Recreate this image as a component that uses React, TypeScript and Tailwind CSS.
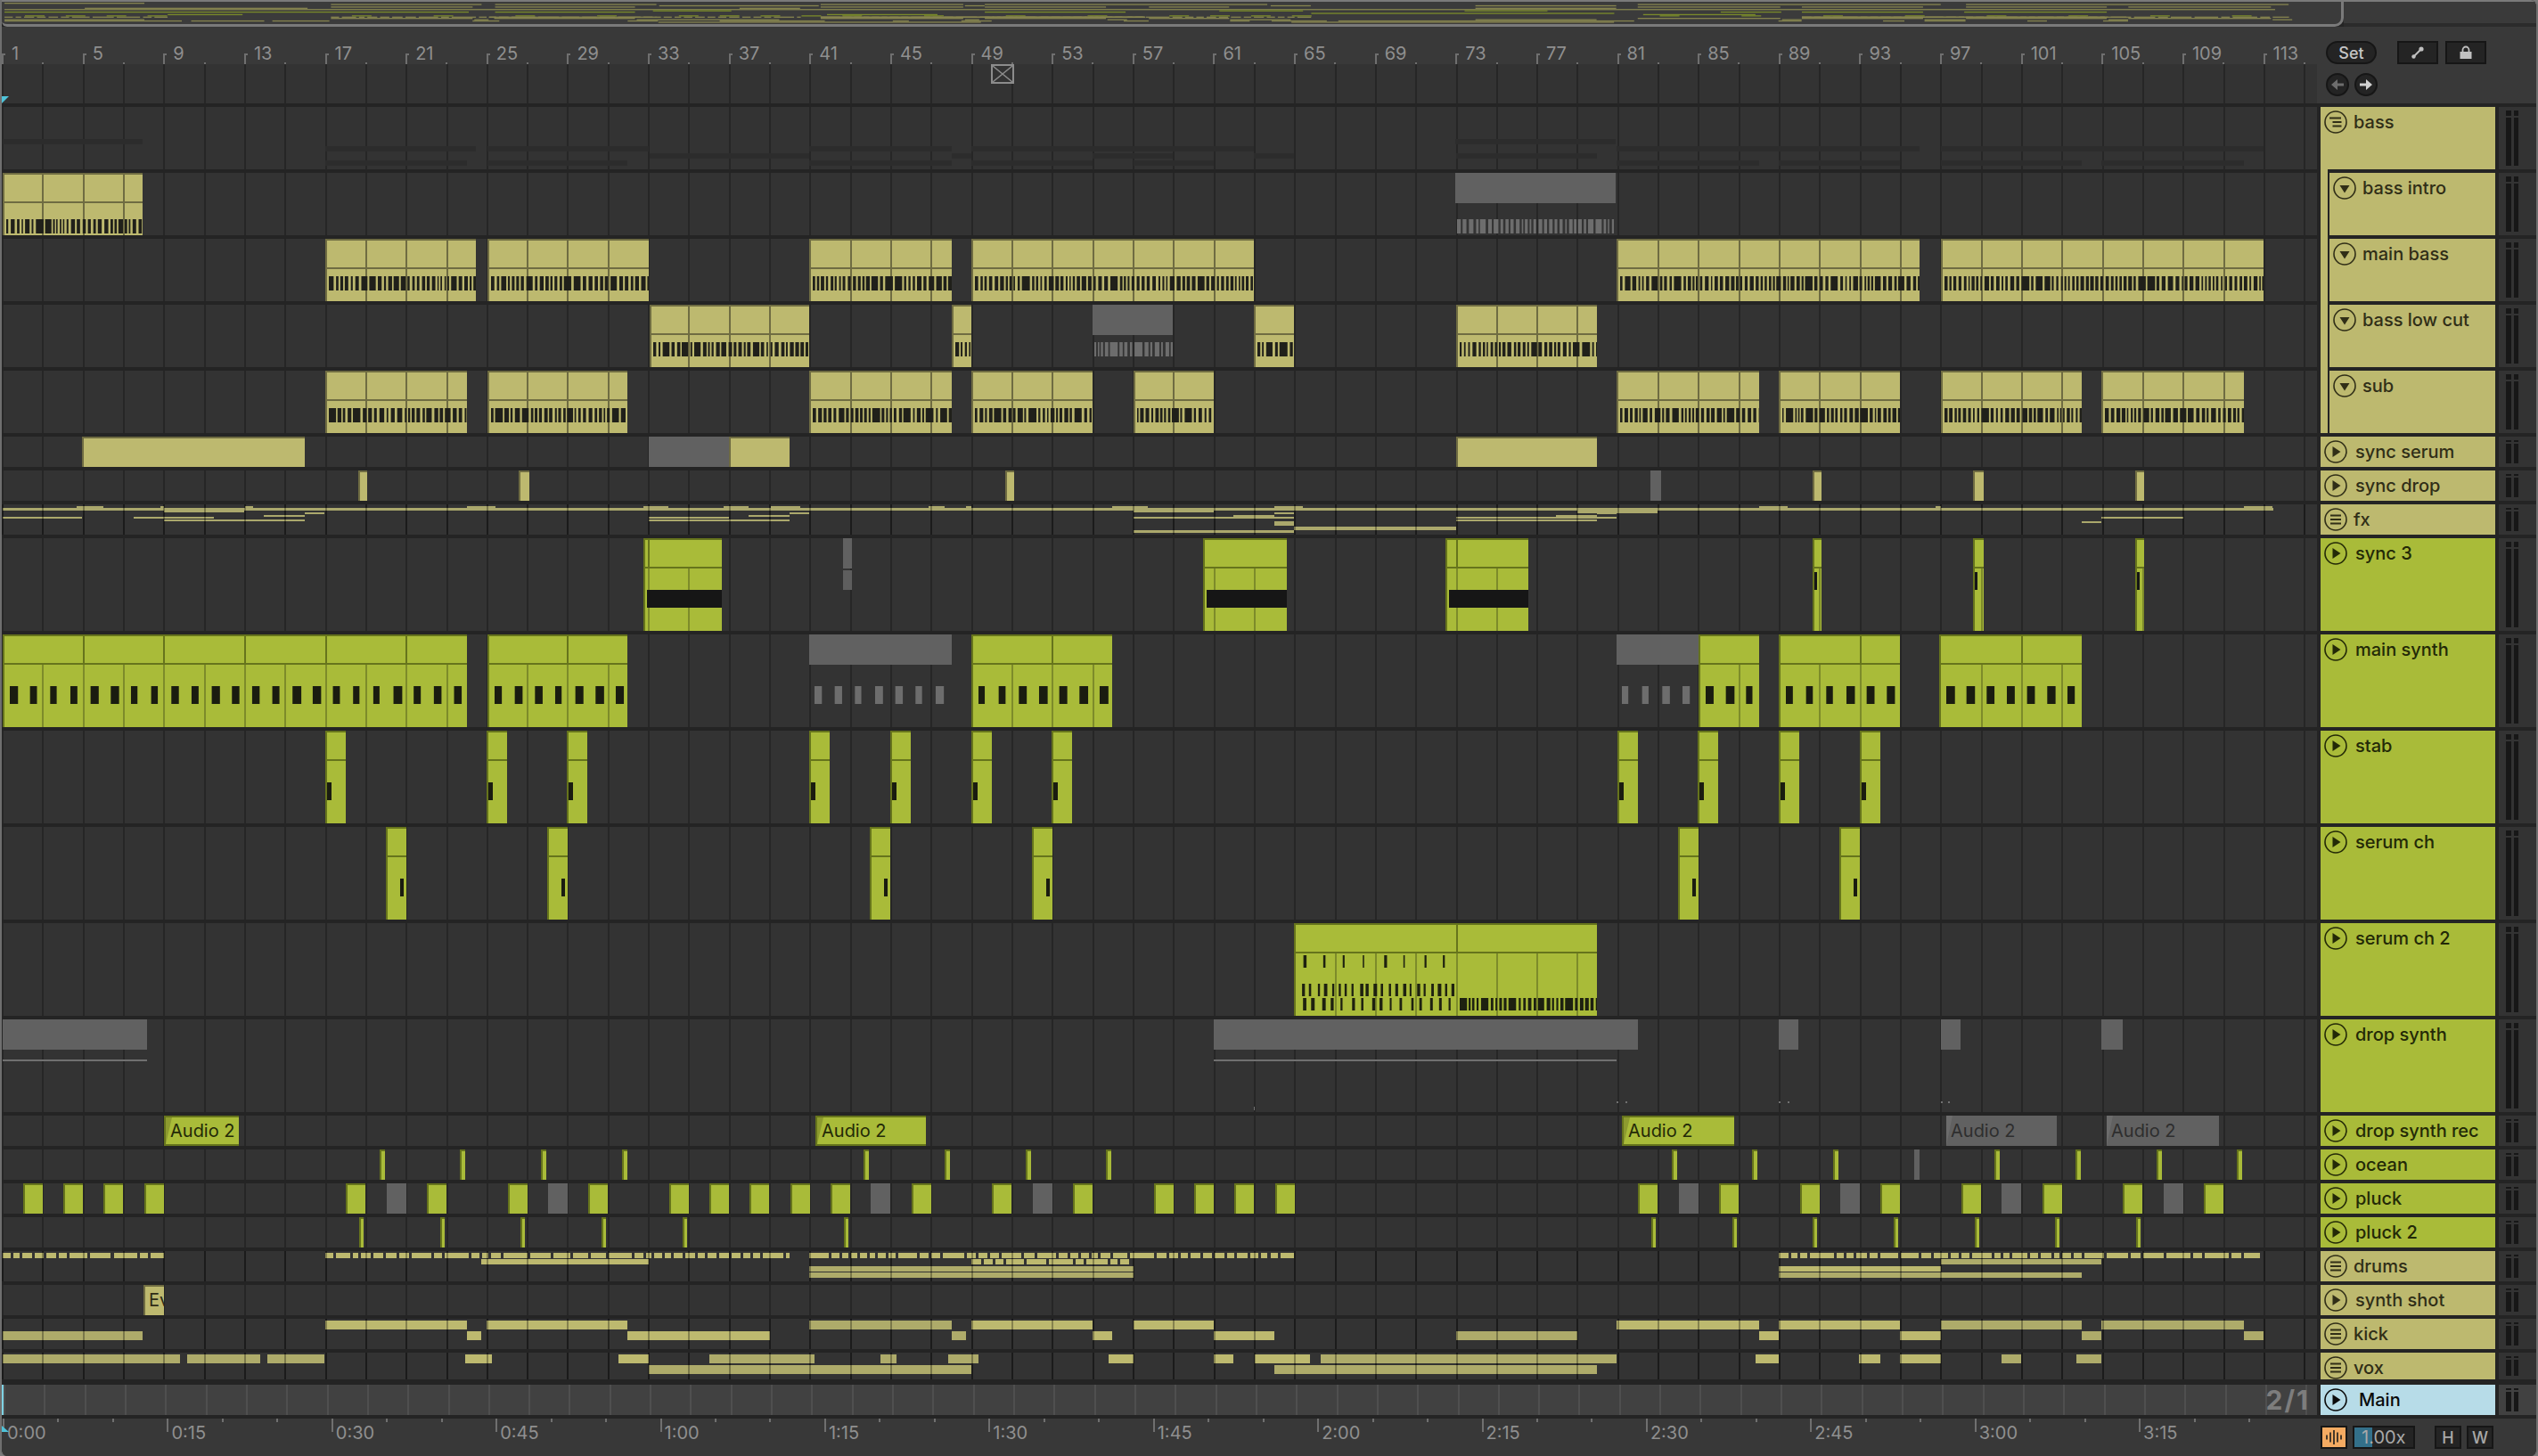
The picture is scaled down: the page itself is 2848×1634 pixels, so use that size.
import React from 'react';

type Span = [number, number];
type Seg = [number, number, number, number, boolean?];
type Tone = 'khaki' | 'green' | 'gray';

const BAR = 22.66;
// x position of a bar on the page
const bx = (bar: number) => 3 + (bar - 1) * BAR;

const seeded = (seed: number) => {
  let s = seed * 7919 + 17;
  return () => {
    s = (s * 16807) % 2147483647;
    return (s % 1000) / 1000;
  };
};

const toneClass: Record<Tone, { body: string; line: string; thin: string }> = {
  khaki: { body: 'bg-[#bdb96f] border-t-2 border-l-2 border-[#6f6c42]', line: 'bg-[#6f6c42]', thin: 'bg-[#6f6c42]' },
  green: { body: 'bg-[#a9bb39] border-t-2 border-l-2 border-[#66741c]', line: 'bg-[#66741c]', thin: 'bg-[#7d8b2a]' },
  gray: { body: '', line: 'bg-[#5a5a5a]', thin: 'bg-[#262626]' },
};

const gridXs = (from: number, to: number, step: number) => {
  const xs: number[] = [];
  for (let k = 0; k < 60; k++) {
    const x = 3 + k * step * BAR;
    if (x > from + 4 && x < to) xs.push(x);
  }
  return xs;
};

const Notes = ({ items, top, h, color }: { items: Span[]; top: number; h: number; color: string }) => (
  <svg className="absolute left-0" style={{ top }} width="100%" height={h}>
    {items.map(([x, w], i) => (
      <rect key={i} x={x} y={0} width={w} height={h} fill={color} />
    ))}
  </svg>
);

const barcode = (width: number, seed: number) => {
  const r = seeded(seed);
  const out: Span[] = [];
  let x = 2;
  while (x < width - 1) {
    const w = r() < 0.2 ? 5 + r() * 4 : 1.5 + r() * 3;
    out.push([x, Math.min(w, width - x)]);
    x += w + 1.5 + r() * 1.5;
  }
  return out;
};

type ClipProps = {
  span: Span;
  tone: Tone;
  title?: boolean;
  titleStep?: number;
  bodyStep?: number;
  children?: React.ReactNode;
};

const Clip = ({ span, tone, title = true, titleStep = 2, bodyStep = 2, children }: ClipProps) => {
  const [from, to] = span;
  const c = toneClass[tone];
  const width = to - from;
  if (tone === 'gray') {
    return (
      <div className="absolute top-0 bottom-0" style={{ left: from - 2, width }}>
        <div className={`${title ? 'h-[34px]' : 'h-full'} bg-[#616161]`} />
        {children}
      </div>
    );
  }
  return (
    <div className={`absolute top-0 bottom-0 overflow-hidden ${c.body}`} style={{ left: from - 2, width }}>
      {title && (
        <>
          <div className={`absolute left-0 right-0 top-[30px] h-[2px] ${c.line}`} />
          {gridXs(from, to, titleStep).map((x) => (
            <div key={x} className={`absolute top-0 h-[30px] w-[2px] ${c.line}`} style={{ left: x - from - 3 }} />
          ))}
          {gridXs(from, to, bodyStep).map((x) => (
            <div key={x} className={`absolute top-[32px] bottom-0 w-[2px] ${c.thin}`} style={{ left: x - from - 3 }} />
          ))}
        </>
      )}
      {children}
    </div>
  );
};

const BassClip = ({ span, gray, top, seed }: { span: Span; gray?: boolean; top: number; seed: number }) => {
  const items = barcode(span[1] - span[0], seed);
  if (gray) {
    return (
      <Clip span={span} tone="gray">
        <Notes items={items} top={top} h={16} color="#6d6d6d" />
      </Clip>
    );
  }
  return (
    <Clip span={span} tone="khaki">
      <Notes items={items} top={top - 2} h={16} color="#20201a" />
    </Clip>
  );
};

const Segs = ({ items, color, dimColor }: { items: Seg[]; color: string; dimColor?: string }) => (
  <>
    {items.map(([from, to, top, h, dim], i) => (
      <div
        key={i}
        className={dim ? dimColor : color}
        style={{ position: 'absolute', left: from - 2, width: to - from, top, height: h }}
      />
    ))}
  </>
);

const LineOverlay = () => (
  <div className="absolute inset-0 bg-[repeating-linear-gradient(90deg,rgba(0,0,0,0.3)_0px,rgba(0,0,0,0.3)_2px,transparent_2px,transparent_45.32px)]" />
);

const bassIntro: Span[] = [[3, 160]];
const bassIntroGray: Span[] = [[1633, 1813]];
const mainBass: Span[] = [[365, 534], [547, 728], [908, 1068], [1090, 1407], [1814, 2154], [2178, 2540]];
const lowCut: Span[] = [[729, 908], [1068, 1090], [1407, 1452], [1634, 1792]];
const lowCutGray: Span[] = [[1226, 1316]];
const sub: Span[] = [[365, 524], [547, 704], [908, 1068], [1090, 1226], [1272, 1362], [1814, 1974], [1996, 2132], [2178, 2336], [2358, 2518]];
const syncSerum: Span[] = [[92, 342], [818, 886], [1634, 1792]];
const syncDrop: Span[] = [[402, 412], [582, 594], [1128, 1138], [2034, 2044], [2214, 2226], [2396, 2406]];
const sync3: Span[] = [[722, 810], [1350, 1444], [1622, 1715]];
const sync3Thin: Span[] = [[2034, 2044], [2214, 2226], [2396, 2406]];
const mainSynth: Span[] = [[3, 524], [547, 704], [1090, 1248], [1906, 1974], [1996, 2132], [2176, 2336]];
const mainSynthGray: Span[] = [[908, 1068], [1814, 1906]];
const stab = [17, 25, 29, 41, 45, 49, 53, 81, 85, 89, 93];
const serumCh = [20, 28, 44, 52, 84, 92];
const dropSynth: Span[] = [[3, 165], [1362, 1838], [1996, 2018], [2178, 2200], [2358, 2382]];
const audioGreen: Span[] = [[184, 268], [915, 1039], [1820, 1946]];
const audioGray: Span[] = [[2184, 2308], [2364, 2490]];
const ocean = [19.65, 23.65, 27.65, 31.65, 43.65, 47.65, 51.65, 55.65, 83.65, 87.65, 91.65, 99.65, 103.65, 107.65, 111.65];
const pluck = [2, 4, 6, 8, 18, 22, 26, 30, 34, 36, 38, 40, 42, 46, 50, 54, 58, 60, 62, 64, 82, 86, 90, 94, 98, 102, 106, 110];
const pluckGray = [20, 28, 44, 52, 84, 92, 100, 108];
const pluck2 = [18.65, 22.65, 26.65, 30.65, 34.65, 42.65, 82.65, 86.65, 90.65, 94.65, 98.65, 102.65, 106.65];

const fxSegs: Seg[] = [
  [3, 2551, 4, 3],
  [86, 116, 2, 2], [180, 184, 2, 2], [275, 284, 2, 2], [524, 556, 2, 2], [722, 750, 2, 2], [812, 840, 2, 2],
  [865, 898, 2, 2], [1042, 1060, 2, 2], [1084, 1090, 2, 2], [1248, 1288, 2, 2], [1430, 1462, 2, 2],
  [1974, 2006, 2, 2], [2172, 2178, 2, 2], [2518, 2550, 2, 2],
  [184, 274, 7, 2], [1272, 1362, 7, 2], [1770, 1860, 7, 3],
  [342, 364, 9, 2], [886, 908, 9, 2], [1430, 1452, 9, 2], [1792, 1814, 9, 2],
  [296, 342, 12, 2], [840, 886, 12, 2], [1384, 1430, 12, 2], [1746, 1792, 12, 2],
  [3, 92, 14, 2], [150, 240, 14, 2], [728, 818, 14, 2], [1272, 1452, 14, 2], [1634, 1814, 14, 2], [2358, 2450, 14, 2],
  [184, 342, 17, 2], [728, 886, 17, 2], [1634, 1792, 17, 2],
  [1430, 1452, 19, 2], [2336, 2358, 19, 2], [1430, 1452, 21, 3],
  [1452, 1634, 25, 4],
  [1272, 1452, 29, 3],
];

const dashes = (from: number, to: number, top: number, h: number, seed: number, big = 1) => {
  const r = seeded(seed);
  const out: Seg[] = [];
  let x = from;
  while (x < to - 2) {
    const w = r() < 0.35 ? 16 + r() * 12 * big : 6 + r() * 6;
    out.push([x, Math.min(x + w, to), top, h]);
    x += w + 3;
  }
  return out;
};

const drumSegs: Seg[] = [
  ...dashes(3, 184, 2, 6, 3),
  ...dashes(365, 886, 2, 6, 5),
  ...dashes(908, 1452, 2, 6, 7),
  ...dashes(1996, 2540, 2, 6, 9),
  [540, 728, 9, 6],
  ...dashes(1090, 1270, 9, 6, 11, 2),
  [2178, 2358, 9, 6, true],
  [908, 1272, 17, 6, true],
  [1996, 2178, 17, 6],
  [908, 1272, 24, 6, true],
  [1996, 2336, 24, 6, true],
];

const T = 2;
const B = 14;
const kickSegs: Seg[] = [
  [3, 160, B, 10, true], [365, 524, T, 10], [524, 540, B, 10], [546, 704, T, 10], [704, 864, B, 10],
  [908, 1068, T, 10, true], [1068, 1084, B, 10, true], [1090, 1226, T, 10], [1226, 1248, B, 10],
  [1272, 1362, T, 10], [1362, 1430, B, 10], [1634, 1770, B, 10, true], [1814, 1974, T, 10], [1974, 1996, B, 10],
  [1996, 2132, T, 10], [2132, 2178, B, 10], [2178, 2336, T, 10, true], [2336, 2358, B, 10, true],
  [2358, 2518, T, 10, true], [2518, 2540, B, 10, true],
];
const voxSegs: Seg[] = [
  [3, 202, T, 10, true], [210, 292, T, 10, true], [300, 364, T, 10, true], [522, 552, T, 10], [694, 728, T, 10],
  [728, 1090, B, 10, true], [796, 914, T, 10, true], [988, 1006, T, 10, true], [1064, 1098, T, 10, true],
  [1244, 1272, T, 10], [1362, 1384, T, 10], [1408, 1470, T, 10], [1482, 1814, T, 10, true], [1430, 1792, B, 10, true],
  [1970, 1996, T, 10], [2086, 2110, T, 10], [2132, 2178, T, 10], [2246, 2268, T, 10, true], [2330, 2358, T, 10, true],
];

type Track = {
  name: string;
  h: string;
  color: 'khaki' | 'green' | 'sky';
  icon: 'groupOpen' | 'group' | 'down' | 'play';
  nested?: boolean;
  cls?: string;
  render: () => React.ReactNode;
};

const miniBars = (spans: Span[], top: number) =>
  spans.map(([from, to]) => (
    <div
      key={`${from}-${top}`}
      className="absolute h-[6px] bg-[#2c2c2c]"
      style={{ left: from - 2, width: to - from, top }}
    />
  ));

const AudioClip = ({ span, gray }: { span: Span; gray?: boolean }) => (
  <div
    className={`absolute top-0 bottom-0 overflow-hidden pl-[5px] text-[20px] leading-[30px] ${
      gray ? 'bg-[#616161] pt-[2px] text-[#2e2e2e]' : 'border-t-2 border-b-2 border-l-2 border-[#66741c] bg-[#a9bb39] text-[#232907]'
    }`}
    style={{ left: span[0] - 2, width: span[1] - span[0] }}
  >
    <div className={`absolute left-0 top-0 h-full w-[7px] [clip-path:polygon(0_100%,100%_0,0_0)] ${gray ? 'bg-[#6c6c6c]' : 'bg-[#8d9b2f]'}`} />
    Audio 2
  </div>
);

const tracks: Track[] = [
  {
    name: 'bass', h: 'h-[70px]', color: 'khaki', icon: 'groupOpen',
    render: () => (
      <>
        {miniBars([...bassIntro, ...bassIntroGray], 36)}
        {miniBars(mainBass, 44)}
        {miniBars([...lowCut, ...lowCutGray], 52)}
        {miniBars(sub, 60)}
      </>
    ),
  },
  {
    name: 'bass intro', h: 'h-[70px]', color: 'khaki', icon: 'down', nested: true,
    render: () => (
      <>
        {bassIntro.map((s, i) => <BassClip key={i} span={s} top={52} seed={i + 1} />)}
        {bassIntroGray.map((s, i) => <BassClip key={i} span={s} gray top={52} seed={i + 2} />)}
      </>
    ),
  },
  {
    name: 'main bass', h: 'h-[70px]', color: 'khaki', icon: 'down', nested: true,
    render: () => mainBass.map((s, i) => <BassClip key={i} span={s} top={42} seed={i + 10} />),
  },
  {
    name: 'bass low cut', h: 'h-[70px]', color: 'khaki', icon: 'down', nested: true,
    render: () => (
      <>
        {lowCut.map((s, i) => <BassClip key={i} span={s} top={42} seed={i + 20} />)}
        {lowCutGray.map((s, i) => <BassClip key={i} span={s} gray top={42} seed={i + 25} />)}
      </>
    ),
  },
  {
    name: 'sub', h: 'h-[70px]', color: 'khaki', icon: 'down', nested: true,
    render: () => sub.map((s, i) => <BassClip key={i} span={s} top={42} seed={i + 30} />),
  },
  {
    name: 'sync serum', h: 'h-[34px]', color: 'khaki', icon: 'play',
    render: () => (
      <>
        {syncSerum.map((s, i) => <Clip key={i} span={s} tone="khaki" title={false} />)}
        <Clip span={[728, 818]} tone="gray" title={false} />
      </>
    ),
  },
  {
    name: 'sync drop', h: 'h-[34px]', color: 'khaki', icon: 'play',
    render: () => (
      <>
        {syncDrop.map((s, i) => <Clip key={i} span={s} tone="khaki" title={false} />)}
        <Clip span={[1852, 1864]} tone="gray" title={false} />
      </>
    ),
  },
  {
    name: 'fx', h: 'h-[34px]', color: 'khaki', icon: 'group',
    render: () => (
      <>
        <Segs items={fxSegs} color="bg-[#aba86c]" />
        <LineOverlay />
      </>
    ),
  },
  {
    name: 'sync 3', h: 'h-[104px]', color: 'green', icon: 'play',
    render: () => (
      <>
        {sync3.map((s, i) => (
          <Clip key={i} span={s} tone="green" titleStep={8}>
            <div className="absolute left-[2px] right-0 top-[56px] h-[20px] bg-[#161616]" />
          </Clip>
        ))}
        {sync3Thin.map((s, i) => (
          <Clip key={i} span={s} tone="green" titleStep={8}>
            <div className="absolute left-0 w-[3px] top-[36px] h-[20px] bg-[#161616]" />
          </Clip>
        ))}
        <Clip span={[946, 956]} tone="gray">
          <div className="mt-[2px] h-[22px] bg-[#5e5e5e]" />
        </Clip>
      </>
    ),
  },
  {
    name: 'main synth', h: 'h-[104px]', color: 'green', icon: 'play',
    render: () => {
      const perBar = (span: Span, seed: number) => {
        const r = seeded(seed);
        const items: Span[] = [];
        for (let x = 6; x < span[1] - span[0] - 6; x += BAR) items.push([x, 7 + r() * 3]);
        return items;
      };
      return (
        <>
          {mainSynth.map((s, i) => (
            <Clip key={i} span={s} tone="green" titleStep={4}>
              <Notes items={perBar(s, i + 40)} top={56} h={20} color="#1a1c10" />
            </Clip>
          ))}
          {mainSynthGray.map((s, i) => (
            <Clip key={i} span={s} tone="gray">
              <Notes items={perBar(s, i + 50)} top={58} h={20} color="#6d6d6d" />
            </Clip>
          ))}
        </>
      );
    },
  },
  {
    name: 'stab', h: 'h-[104px]', color: 'green', icon: 'play',
    render: () =>
      stab.map((b) => (
        <Clip key={b} span={[bx(b) - 1, bx(b) + 22]} tone="green">
          <div className="absolute left-0 w-[5px] top-[56px] h-[20px] bg-[#1a1c10]" />
        </Clip>
      )),
  },
  {
    name: 'serum ch', h: 'h-[104px]', color: 'green', icon: 'play',
    render: () =>
      serumCh.map((b) => (
        <Clip key={b} span={[bx(b) - 1, bx(b) + 22]} tone="green">
          <div className="absolute right-[3px] w-[4px] top-[56px] h-[20px] bg-[#1a1c10]" />
        </Clip>
      )),
  },
  {
    name: 'serum ch 2', h: 'h-[104px]', color: 'green', icon: 'play',
    render: () => {
      const r = seeded(77);
      const sparse = (gap: number, w: number) => {
        const items: Span[] = [];
        for (let x = 6; x < 178; x += gap) items.push([x + r() * 3, w + r() * 2]);
        return items;
      };
      const dense: Span[] = barcode(158, 88).map(([x, w]) => [x + 182, w]);
      return (
        <Clip span={[1452, 1792]} tone="green" titleStep={8}>
          <Notes items={sparse(22.6, 1.5)} top={34} h={14} color="#1e2110" />
          <Notes items={sparse(8, 2)} top={66} h={14} color="#1e2110" />
          <Notes items={[...sparse(11, 2), ...dense]} top={82} h={14} color="#1e2110" />
        </Clip>
      );
    },
  },
  {
    name: 'drop synth', h: 'h-[104px]', color: 'green', icon: 'play',
    render: () => (
      <>
        {dropSynth.map((s, i) => <Clip key={i} span={s} tone="gray" />)}
        <Segs items={[[3, 165, 45, 2], [1362, 1814, 45, 2], [1814, 1816, 92, 2], [1824, 1826, 92, 2], [1996, 1998, 92, 2], [2006, 2008, 92, 2], [2178, 2180, 92, 2], [2186, 2188, 92, 2], [1407, 1408, 98, 4]]} color="bg-[#707070]" />
      </>
    ),
  },
  {
    name: 'drop synth rec', h: 'h-[34px]', color: 'green', icon: 'play',
    render: () => (
      <>
        {audioGreen.map((s, i) => <AudioClip key={i} span={s} />)}
        {audioGray.map((s, i) => <AudioClip key={i} span={s} gray />)}
      </>
    ),
  },
  {
    name: 'ocean', h: 'h-[34px]', color: 'green', icon: 'play',
    render: () => (
      <>
        {ocean.map((b) => <Clip key={b} span={[bx(b), bx(b) + 6]} tone="green" title={false} />)}
        <Clip span={[bx(95.65), bx(95.65) + 6]} tone="gray" title={false} />
      </>
    ),
  },
  {
    name: 'pluck', h: 'h-[34px]', color: 'green', icon: 'play',
    render: () => (
      <>
        {pluck.map((b) => <Clip key={b} span={[bx(b), bx(b) + 22]} tone="green" title={false} />)}
        {pluckGray.map((b) => <Clip key={b} span={[bx(b), bx(b) + 22]} tone="gray" title={false} />)}
      </>
    ),
  },
  {
    name: 'pluck 2', h: 'h-[34px]', color: 'green', icon: 'play',
    render: () => pluck2.map((b) => <Clip key={b} span={[bx(b), bx(b) + 5]} tone="green" title={false} />),
  },
  {
    name: 'drums', h: 'h-[34px]', color: 'khaki', icon: 'group',
    render: () => (
      <>
        <Segs items={drumSegs} color="bg-[#bdb96f]" dimColor="bg-[#aeab6a]" />
        <LineOverlay />
      </>
    ),
  },
  {
    name: 'synth shot', h: 'h-[34px]', color: 'khaki', icon: 'play',
    render: () => (
      <Clip span={[161, 184]} tone="khaki" title={false}>
        <span className="block pl-[4px] text-[20px] leading-[30px] text-[#2e2c16]">Ev</span>
      </Clip>
    ),
  },
  {
    name: 'kick', h: 'h-[34px]', color: 'khaki', icon: 'group',
    render: () => (
      <>
        <Segs items={kickSegs} color="bg-[#bdb96f]" dimColor="bg-[#aeab6a]" />
        <LineOverlay />
      </>
    ),
  },
  {
    name: 'vox', h: 'h-[30px]', color: 'khaki', icon: 'group', cls: 'mb-[2px]',
    render: () => (
      <>
        <Segs items={voxSegs} color="bg-[#bdb96f]" dimColor="bg-[#aeab6a]" />
        <LineOverlay />
      </>
    ),
  },
];

const TrackIcon = ({ kind }: { kind: Track['icon'] }) => (
  <svg width="26" height="26" viewBox="0 0 26 26" className="shrink-0">
    <circle cx="13" cy="13" r="12" fill="none" stroke="currentColor" strokeWidth="1.6" />
    {kind === 'group' && (
      <path d="M7 8.5h12M7 13h12M7 17.5h12" stroke="currentColor" strokeWidth="2" />
    )}
    {kind === 'groupOpen' && (
      <path d="M6 8.5h13M9.5 13h10M9.5 17.5h10" stroke="currentColor" strokeWidth="2" />
    )}
    {kind === 'down' && <path d="M7.5 10h11L13 18.5z" fill="currentColor" />}
    {kind === 'play' && <path d="M9.5 7l9 6-9 6z" fill="currentColor" />}
  </svg>
);

const Meter = ({ main, short }: { main?: boolean; short: boolean }) => (
  <div className={`ml-1 flex w-[42px] justify-start gap-[3px] pl-2 ${main ? 'bg-[#414141]' : 'bg-[#333333]'} py-1`}>
    {[0, 1].map((i) => (
      <div key={i} className="flex w-[5.5px] flex-col gap-[2px]">
        <div className={`${short ? 'h-[2px]' : 'h-[6px]'} bg-[#171717]`} />
        <div className="flex-1 bg-[#171717]" />
      </div>
    ))}
  </div>
);

const Header = ({ track }: { track: Track }) => {
  const colors = {
    khaki: 'bg-[#bdb96f] text-[#302e17]',
    green: 'bg-[#a9bb39] text-[#232907]',
    sky: 'bg-[#b7dce8] text-[#0b0b0b]',
  }[track.color];
  const labelMargin = track.icon === 'play' ? (track.color === 'sky' ? 'ml-[13px]' : 'ml-[9px]') : 'ml-[7px]';
  return (
    <div className={`relative ml-1 flex w-[196px] overflow-hidden ${colors}`}>
      {track.nested && <div className="box-content w-2 shrink-0 border-r-2 border-[#242424]" />}
      <div className="flex flex-1 items-start pl-1 pt-1">
        <TrackIcon kind={track.icon} />
        <span className={`${labelMargin} whitespace-nowrap text-[20px] font-medium leading-[26px]`}>{track.name}</span>
      </div>
    </div>
  );
};

const gridLines =
  'bg-[#333333] bg-[repeating-linear-gradient(90deg,#262626_0px,#262626_2px,transparent_2px,transparent_45.32px)]';

const TrackRow = ({ track }: { track: Track }) => (
  <div className={`relative flex ${track.h} ${track.cls ?? ''}`}>
    <div className={`relative w-[2598px] overflow-hidden ${gridLines}`}>{track.render()}</div>
    <Header track={track} />
    <Meter short={track.h !== 'h-[70px]' && track.h !== 'h-[104px]'} />
    {track.nested && <div className="absolute left-[2602px] -top-1 h-1 w-2 bg-[#bdb96f]" />}
  </div>
);

const overviewColor = { khaki: '#86844f', green: '#7a8b2a', sky: '#777' };
const overviewData: { color: string; spans: Span[] }[] = [
  { color: overviewColor.khaki, spans: bassIntro },
  { color: overviewColor.khaki, spans: mainBass },
  { color: overviewColor.khaki, spans: lowCut },
  { color: overviewColor.khaki, spans: sub },
  { color: overviewColor.khaki, spans: syncSerum },
  { color: overviewColor.khaki, spans: fxSegs.slice(0, 1).map((s) => [s[0], s[1]] as Span) },
  { color: overviewColor.green, spans: sync3 },
  { color: overviewColor.green, spans: mainSynth },
  { color: overviewColor.green, spans: [[1452, 1792]] },
  { color: overviewColor.green, spans: audioGreen },
  { color: overviewColor.green, spans: pluck.map((b) => [bx(b), bx(b) + 22] as Span) },
  { color: overviewColor.khaki, spans: drumSegs.map((s) => [s[0], s[1]] as Span) },
  { color: overviewColor.khaki, spans: kickSegs.filter((s) => s[2] === T).map((s) => [s[0], s[1]] as Span) },
  { color: overviewColor.khaki, spans: kickSegs.filter((s) => s[2] === B).map((s) => [s[0], s[1]] as Span) },
  { color: overviewColor.khaki, spans: voxSegs.filter((s) => s[2] === T).map((s) => [s[0], s[1]] as Span) },
  { color: overviewColor.khaki, spans: voxSegs.filter((s) => s[2] === B).map((s) => [s[0], s[1]] as Span) },
];

const Overview = () => (
  <div className="flex h-[30px] border-t-2 border-[#7a7a7a]">
    <div className="h-full w-[2628px] overflow-hidden rounded-br-[10px] rounded-bl-[6px] border-r-[3px] border-b-[3px] border-[#7a7a7a] bg-[#3b3b3b]">
      <svg width="2625" height="25">
        {overviewData.map((row, i) =>
          row.spans.map(([from, to], j) => (
            <rect key={`${i}-${j}`} x={from * 1.012} y={1 + i * 1.42} width={to - from} height={1.3} fill={row.color} />
          )),
        )}
      </svg>
    </div>
    <div className="h-full flex-1 border-b-4 border-[#2b2b2b] bg-[#3a3a3a]" />
  </div>
);

const BarRuler = () => {
  const labels: number[] = [];
  for (let b = 1; b <= 113; b += 4) labels.push(b);
  return (
    <div className="flex h-[42px]">
      <div className="flex w-[2598px] overflow-hidden bg-[#393939]">
        {labels.map((b) => (
          <div key={b} className="grid h-full w-[90.64px] shrink-0 grid-cols-2">
            <div className="flex items-end">
              <div className="h-[12px] w-[4px] shrink-0 border-t-2 border-l-2 border-[#6f6f6f]" />
              <span className="ml-[7px] whitespace-nowrap text-[20px] leading-[24px] text-[#8f8f8f]">{b}</span>
            </div>
            <div className="flex items-end">
              <div className="h-[2px] w-[2px] bg-[#6f6f6f]" />
            </div>
          </div>
        ))}
      </div>
      <div className="flex flex-1 items-start bg-[#393939] pl-[10px] pt-[16px]">
        <div className="flex h-[26px] w-[57px] items-center justify-center rounded-full border-2 border-[#161616] bg-[#242424] text-[18px] font-medium text-[#c6c6c6]">
          Set
        </div>
        <div className="ml-[23px] flex h-[26px] w-[46px] items-center justify-center border-2 border-[#161616] bg-[#242424]">
          <svg width="16" height="16" viewBox="0 0 16 16">
            <path d="M3.5 12.5L12 4" stroke="#c0c0c0" strokeWidth="2" />
            <circle cx="12" cy="4" r="2.6" fill="#c0c0c0" />
            <circle cx="3.5" cy="12.5" r="2.2" fill="#c0c0c0" />
          </svg>
        </div>
        <div className="ml-2 flex h-[26px] w-[46px] items-center justify-center border-2 border-[#161616] bg-[#242424]">
          <svg width="16" height="16" viewBox="0 0 16 16">
            <path d="M4.5 7V5a3.5 3.5 0 017 0v2" fill="none" stroke="#c0c0c0" strokeWidth="1.8" />
            <rect x="1.5" y="7" width="13" height="8" fill="#c0c0c0" />
          </svg>
        </div>
      </div>
    </div>
  );
};

const ArrowButton = ({ dir, color }: { dir: 'left' | 'right'; color: string }) => (
  <div className="flex h-[26px] w-[26px] items-center justify-center rounded-full border-2 border-[#161616] bg-[#242424]">
    <svg width="16" height="14" viewBox="0 0 16 14">
      <path d={dir === 'right' ? 'M1 5.5h7V1l7 6-7 6V8.5H1z' : 'M15 5.5H8V1L1 7l7 6V8.5h7z'} fill={color} />
    </svg>
  </div>
);

const MainRow = () => (
  <div className="relative flex h-[34px]">
    <div className="relative flex w-[2598px] items-center justify-end overflow-hidden border-l-2 border-[#7fd3e4] bg-[#414141] bg-[repeating-linear-gradient(90deg,#4f4f4f_0px,#4f4f4f_2px,transparent_2px,transparent_45.32px)] pr-[8px]">
      <span className="text-[30px] font-bold leading-[34px] tracking-[2px] text-[#7d7d7d]">2/1</span>
    </div>
    <Header track={{ name: 'Main', h: 'h-[34px]', color: 'sky', icon: 'play', render: () => null }} />
    <Meter main short />
  </div>
);

const TimeRuler = () => {
  const major: number[] = [];
  for (let i = 0; i < 14; i++) major.push(i);
  return (
    <div className="flex h-[42px]">
      <div className="relative flex w-[2598px] overflow-hidden bg-[#383838] pl-px">
        {major.map((i) => {
          const total = i * 15;
          const label = `${Math.floor(total / 60)}:${String(total % 60).padStart(2, '0')}`;
          return (
            <div key={i} className="grid h-full w-[184.4px] shrink-0 grid-cols-3">
              <div className="flex items-start">
                <div className="h-[15px] w-[2px] shrink-0 bg-[#6f6f6f]" />
                <span className="ml-[3px] mt-[4px] whitespace-nowrap text-[20px] leading-[24px] text-[#8f8f8f]">{label}</span>
              </div>
              <div className="h-[4px] w-[2px] bg-[#6f6f6f]" />
              <div className="h-[4px] w-[2px] bg-[#6f6f6f]" />
            </div>
          );
        })}
        <div className="absolute left-0 top-[8px] h-[7px] w-[8px] bg-[#4fc3d9] [clip-path:polygon(0_0,100%_100%,0_100%)]" />
      </div>
      <div className="flex flex-1 items-start bg-[#383838] pl-1 pt-2">
        <div className="flex h-[26px] w-[30px] items-center justify-center border-2 border-[#161616] bg-[#f5ab62]">
          <svg width="20" height="18" viewBox="0 0 20 18">
            <path d="M2 6.5v5M6 3.5v11M10 1v16M14 3.5v11M18 6.5v5" stroke="#1d1d1d" strokeWidth="1.6" />
          </svg>
        </div>
        <div className="relative ml-[6px] flex h-[26px] w-[70px] items-center border-2 border-[#161616] bg-[#242424] pl-2 text-[20px] text-[#a9a9a9]">
          <div className="absolute left-0 top-0 h-full w-[20px] bg-[#33708a]" />
          <span className="relative">1.00x</span>
        </div>
        <div className="ml-[22px] flex h-[26px] w-[30px] items-center justify-center border-2 border-[#161616] bg-[#242424] text-[18px] font-medium text-[#a9a9a9]">
          H
        </div>
        <div className="ml-[6px] flex h-[26px] w-[30px] items-center justify-center border-2 border-[#161616] bg-[#242424] text-[18px] font-medium text-[#a9a9a9]">
          W
        </div>
      </div>
    </div>
  );
};

const App = () => (
  <div className="h-[1634px] w-[2848px] overflow-hidden bg-[#7a7a7a] font-['Inter',sans-serif]">
    <div className="h-[1634px] overflow-hidden rounded-b-[8px] rounded-tr-[8px] border-x-2 border-[#6f6f6f] bg-[#242424]">
      <Overview />
      <BarRuler />
      <div className="flex flex-col gap-1">
        {/* empty top row with the arrangement start marker */}
        <div className="flex h-[44px]">
          <div className={`relative w-[2598px] ${gridLines}`}>
            <div className="absolute left-0 top-[36px] h-[8px] w-[8px] bg-[#4fc3d9] [clip-path:polygon(0_0,100%_0,0_100%)]" />
            <svg className="absolute left-[1110px] top-0" width="26" height="22" viewBox="0 0 26 22">
              <rect x="1" y="1" width="24" height="20" fill="#333333" stroke="#8c8c8c" strokeWidth="2" />
              <path d="M2 2l22 18M24 2L2 20" stroke="#8c8c8c" strokeWidth="1.6" />
            </svg>
          </div>
          <div className="flex flex-1 gap-[6px] bg-[#393939] pl-[10px] pt-[10px]">
            <ArrowButton dir="left" color="#6d6d6d" />
            <ArrowButton dir="right" color="#d0d0d0" />
          </div>
        </div>
        {tracks.map((t) => (
          <TrackRow key={t.name} track={t} />
        ))}
        <MainRow />
        <TimeRuler />
      </div>
    </div>
  </div>
);

export default App;
